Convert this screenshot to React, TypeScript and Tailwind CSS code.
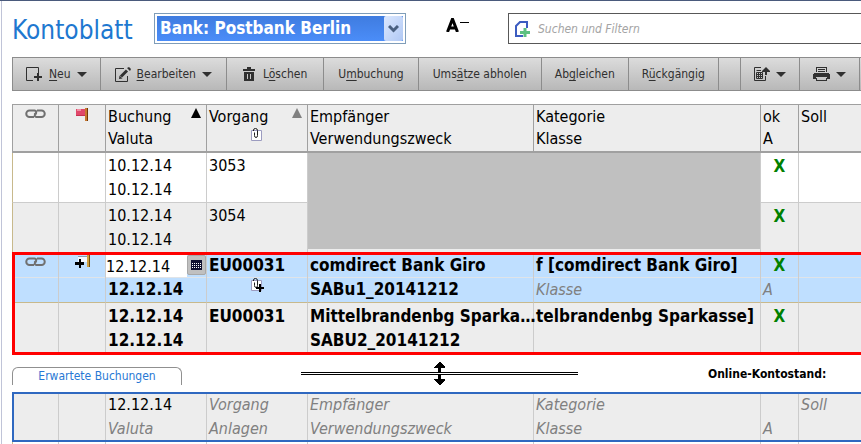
import type { ReactNode } from "react";

const FONT = "font-['DejaVu_Sans_Condensed','DejaVu_Sans',sans-serif]";

function Caret() {
  return (
    <svg width="10" height="5" viewBox="0 0 10 5" className="shrink-0 fill-[#303030]" aria-hidden="true">
      <path d="M0 0H10L5 5Z" />
    </svg>
  );
}

function ChainIcon() {
  return (
    <svg width="21" height="10" viewBox="0 0 21 10" fill="none" stroke="#707070" strokeWidth="2" className="inline-block align-top" aria-hidden="true">
      <path d="M9 8H4.500A3 3 0 0 1 4.500 1.500H9.500Q12 2 11 4L9.500 5.500" />
      <path d="M12 1.500H16.500A3 3 0 0 1 16.500 8H11.500Q9 7.500 10 5.500L11.500 4" />
    </svg>
  );
}

function FlagIcon() {
  return (
    <svg width="12" height="13" viewBox="0 0 12 13" shapeRendering="crispEdges" className="inline-block align-top" aria-hidden="true">
      <path fill="#e0486a" d="M0 1H9V8H0Z" />
      <path fill="#f090a4" d="M1 1H5V3H1Z" />
      <path fill="#c83050" d="M0 7H9V8H0Z" />
      <path fill="#c87830" d="M9 0H11V13H9Z" />
      <path fill="#703808" d="M11 0H12V13H11Z" />
    </svg>
  );
}

function AddFlagIcon() {
  return (
    <svg width="15" height="14" viewBox="0 0 15 14" shapeRendering="crispEdges" className="inline-block align-top" aria-hidden="true">
      <path fill="#f4f8ff" d="M3 1H12V7H3Z" />
      <path fill="#8c9cb0" d="M3 1H12V2H3Z" />
      <path fill="#d0a040" d="M12 0H14V12H12Z" />
      <path fill="#705010" d="M14 0H15V12H14Z" />
      <path fill="#000" d="M4 4H6V7H9V10H6V13H4V10H0V7H4Z" />
    </svg>
  );
}

function SortIcon({ className }: { className: string }) {
  return (
    <svg width="10" height="10" viewBox="0 0 10 10" className={className} aria-hidden="true">
      <path d="M5 0L10 10H0Z" />
    </svg>
  );
}

function ClipIcon({ add }: { add?: boolean }) {
  return (
    <svg width="14" height="14" viewBox="0 0 14 14" className="inline-block align-top" aria-hidden="true">
      <path fill="#fff" stroke="#9c9cc0" d="M1.500 2.500H11.500V12.500H1.500Z" />
      <path fill="none" stroke="#202020" d="M3.500 3V2Q3.500 .5 5.500 .5T7.500 2.500V7.500Q7.500 9.500 6 9.500T4.500 7.500V4.500" />
      {add && <path fill="#000" d="M9 6H11V9H14V11H11V14H9V11H6V9H9Z" />}
    </svg>
  );
}

function NewIcon() {
  return (
    <svg width="17" height="15" viewBox="0 0 17 15" fill="none" stroke="#303030" aria-hidden="true">
      <path d="M12.500 6V.5H.5V13.500H7" />
      <path strokeWidth="2" d="M12 6V14M8 10H16" />
    </svg>
  );
}

function EditIcon() {
  return (
    <svg width="16" height="15" viewBox="0 0 16 15" fill="none" stroke="#303030" aria-hidden="true">
      <path d="M9 1.500H.5V14.500H12.500V9" />
      <path strokeWidth="3" d="M6 9.500L12 3.500" />
      <path fill="#303030" stroke="none" d="M12 1L14 0L16 2L15 4ZM4.500 8.500L7.500 11.500L4 12Z" />
    </svg>
  );
}

function TrashIcon() {
  return (
    <svg width="12" height="14" viewBox="0 0 12 14" fill="#303030" shapeRendering="crispEdges" aria-hidden="true">
      <path d="M4 0H8V2H12V4H0V2H4Z" />
      <path fillRule="evenodd" d="M1 5H11V14H1ZM4 7V12H5V7ZM7 7V12H8V7Z" />
    </svg>
  );
}

function ExportIcon() {
  return (
    <svg width="16" height="14" viewBox="0 0 16 14" fill="none" stroke="#303030" aria-hidden="true">
      <path d="M7 .5H.5V13.500H11.500V9" />
      <path d="M2.500 3.500H7M2.500 5.500H8.500V11.500H2.500ZM2.500 7.500H8.500M2.500 9.500H8.500M4.500 5.500V11.500M6.500 5.500V11.500" />
      <path fill="#303030" stroke="none" d="M12 0L16 4V5H13V8H11V5H8V4Z" />
    </svg>
  );
}

function PrinterIcon() {
  return (
    <svg width="17" height="14" viewBox="0 0 17 14" fill="#303030" shapeRendering="crispEdges" aria-hidden="true">
      <path fillRule="evenodd" d="M3 0H14V5H13V1H4V5H3Z" />
      <path d="M5 2H12V3H5ZM5 4H12V5H5Z" />
      <path d="M1 6H16V7H17V12H14V10H3V12H0V7H1Z" />
      <path d="M3 11H4V13H13V11H14V14H3Z" />
    </svg>
  );
}

function ToolButton({
  icon,
  before = "",
  hotkey,
  after,
  menu,
  pad = "px-[13px] gap-1.5",
}: {
  icon?: ReactNode;
  before?: string;
  hotkey?: string;
  after?: string;
  menu?: boolean;
  pad?: string;
}) {
  return (
    <button type="button" className={`flex items-center shrink-0 border-r border-[#8c8c8c] whitespace-nowrap ${pad}`}>
      {icon}
      {after && (
        <span>
          {before}
          <span className="underline underline-offset-2">{hotkey}</span>
          {after}
        </span>
      )}
      {menu && <Caret />}
    </button>
  );
}

function Columns() {
  return (
    <colgroup>
      <col className="w-[47px]" />
      <col className="w-[47px]" />
      <col className="w-[101px]" />
      <col className="w-[101px]" />
      <col className="w-[226px]" />
      <col className="w-[227px]" />
      <col className="w-[38px]" />
      <col />
    </colgroup>
  );
}

const HEAD = "border-r border-[#a0a0a0] border-t border-b-2 px-0.5 py-px font-normal text-left align-top leading-[22px] first:border-l last:border-r-0 whitespace-nowrap";
const CELL = "border-r border-b border-[#cccccc] px-0.5 pt-px align-top leading-6 first:border-l first:border-l-[#c8b98c] last:border-r-0 whitespace-nowrap";
const ACTIVE = "border-r border-b border-r-[#cccccc] border-b-[#c8b98c] p-0 align-top whitespace-nowrap last:border-r-0";

/* Two-line cell of the selected booking with a hairline between the lines */
function ActiveCell({ top, bottom, center }: { top?: ReactNode; bottom?: ReactNode; center?: boolean }) {
  return (
    <td className={ACTIVE}>
      <div className={`h-[25px] leading-6 border-b border-[#e0e4e8] px-0.5 ${center ? "text-center" : ""}`}>{top}</div>
      <div className="h-6 leading-[22px] px-0.5">{bottom}</div>
    </td>
  );
}

const Ok = () => <div className="text-center font-bold text-[17px] text-[#008000]">X</div>;
const Hint = ({ children }: { children: ReactNode }) => <span className="italic text-base font-normal text-[#808080]">{children}</span>;

export default function App() {
  return (
    <div className={`h-screen overflow-hidden flex flex-col bg-white text-base text-black border-t border-t-[#4a5a7c] ${FONT}`}>
      <div className="flex-1 min-h-0 flex flex-col ml-px border-l border-[#c0c4d8] pl-2.5">
        <header className="flex items-start pt-3 h-14 shrink-0">
          <h1 className="w-[142px] shrink-0 text-[26px] leading-[34px] text-[#1e78d0]">Kontoblatt</h1>
          <div className="relative w-[252px] h-[31px] shrink-0 border border-[#7f9db9] p-0.5">
            <select
              aria-label="Konto"
              className="appearance-none w-full h-full bg-linear-to-b from-[#3f7ce0] to-[#4b8df8] text-white text-[17px] font-bold pl-[3px] pr-5 outline-none"
            >
              <option>Bank: Postbank Berlin</option>
            </select>
            <span className="absolute right-0.5 top-0.5 bottom-0.5 w-[19px] rounded-xs bg-linear-to-br from-[#dce8fe] to-[#b0c8f4] flex items-center justify-center pointer-events-none">
              <svg width="11" height="8" viewBox="0 0 11 8" fill="none" stroke="#4a6080" strokeWidth="3" aria-hidden="true">
                <path d="M1 1L5.500 5.500L10 1" />
              </svg>
            </span>
          </div>
          <button type="button" aria-label="Schrift verkleinern" className="w-[102px] shrink-0 h-6 flex items-center justify-center">
            <svg width="23" height="14" viewBox="0 0 23 14" fill="none" stroke="#000" aria-hidden="true">
              <path strokeWidth="3" d="M1.500 14L6.500 1L11.500 14M3 10H10" />
              <path strokeWidth="1" d="M14 4.500H23" />
            </svg>
          </button>
          <label className="flex-1 min-w-0 flex items-center gap-2 h-[31px] border border-r-0 border-[#585858] pl-1.5">
            <svg width="15" height="16" viewBox="0 0 15 16" fill="none" className="shrink-0" aria-hidden="true">
              <path stroke="#3c5cc0" strokeWidth="2" d="M8 15H1V5L5 1H12V7" />
              <path stroke="#5cc080" strokeWidth="3" d="M10 7V16M5 11.500H15" />
            </svg>
            <input
              aria-label="Suchen und Filtern"
              placeholder="Suchen und Filtern"
              className="flex-1 min-w-0 text-xs italic outline-none placeholder:text-[#a4a4a4]"
            />
          </label>
        </header>

        <nav className="flex shrink-0 h-[34px] border-y border-l border-[#8c8c8c] bg-linear-to-b from-[#dcdcdc] to-[#b8b8b8] text-xs text-[#303030]">
          <ToolButton icon={<NewIcon />} hotkey="N" after="eu" menu />
          <ToolButton icon={<EditIcon />} hotkey="B" after="earbeiten" menu pad="px-3.5 gap-1.5" />
          <ToolButton icon={<TrashIcon />} before="L" hotkey="ö" after="schen" pad="px-4 gap-2" />
          <ToolButton before="U" hotkey="m" after="buchung" pad="px-3.5" />
          <ToolButton before="Ums" hotkey="ä" after="tze abholen" pad="px-3.5" />
          <ToolButton before="Ab" hotkey="g" after="leichen" />
          <ToolButton before="R" hotkey="ü" after="ckgängig" />
          <div className="w-[22px] shrink-0 border-r border-[#8c8c8c]" />
          <ToolButton icon={<ExportIcon />} menu />
          <ToolButton icon={<PrinterIcon />} menu />
        </nav>

        <div className="relative mt-[13px] pb-0.5 shrink-0">
          <table className="w-full table-fixed border-separate border-spacing-0">
            <Columns />
            <thead className="bg-[#ededed]">
              <tr>
                <th className={HEAD}><div className="pt-[3px] text-center"><ChainIcon /></div></th>
                <th className={HEAD}><div className="pt-0.5 text-center"><FlagIcon /></div></th>
                <th className={HEAD}>
                  <div className="flex justify-between">Buchung<SortIcon className="mt-0.5 mr-[3px] fill-black" /></div>
                  <div>Valuta</div>
                </th>
                <th className={HEAD}>
                  <div className="flex justify-between">Vorgang<SortIcon className="mt-0.5 mr-[3px] fill-[#808080]" /></div>
                  <div className="text-center"><ClipIcon /></div>
                </th>
                <th className={HEAD}>Empfänger<br />Verwendungszweck</th>
                <th className={HEAD}>Kategorie<br />Klasse</th>
                <th className={HEAD}>ok<br />A</th>
                <th className={HEAD}>Soll</th>
              </tr>
            </thead>
            <tbody>
              <tr className="bg-white">
                <td className={CELL} />
                <td className={CELL} />
                <td className={CELL}>10.12.14<br />10.12.14</td>
                <td className={CELL}>3053</td>
                <td rowSpan={2} colSpan={2} className="border-r border-b border-[#cccccc] bg-[#ededed] p-0 align-top">
                  <div className="h-24 bg-[#c0c0c0]" />
                </td>
                <td className={CELL}><Ok /></td>
                <td className={CELL} />
              </tr>
              <tr className="bg-[#ededed]">
                <td className={CELL} />
                <td className={CELL} />
                <td className={CELL}>10.12.14<br />10.12.14</td>
                <td className={CELL}>3054</td>
                <td className={CELL}><Ok /></td>
                <td className={CELL} />
              </tr>
              <tr className="bg-[#bfdfff] text-[17px] font-bold">
                <ActiveCell center top={<div className="pt-1"><ChainIcon /></div>} />
                <ActiveCell center top={<div className="pt-0.5"><AddFlagIcon /></div>} />
                <td className={ACTIVE}>
                  <div className="flex h-[25px] pt-0.5 border-b border-[#e0e4e8]">
                    <input aria-label="Buchung" defaultValue="12.12.14" className="flex-1 min-w-0 bg-white text-base font-normal pt-0.5 outline-none" />
                    <button type="button" aria-label="Kalender" className="w-[19px] h-5 rounded-xs border border-[#a8a8a8] bg-[#c0c0c0] flex items-center justify-center">
                      <svg width="11" height="10" viewBox="0 0 11 10" shapeRendering="crispEdges" aria-hidden="true">
                        <path fill="#101030" d="M0 0H11V10H0Z" />
                        <path stroke="#fff" strokeDasharray="1 1" d="M1 3.500H10M1 5.500H10M1 7.500H10" />
                      </svg>
                    </button>
                  </div>
                  <div className="h-6 leading-[22px] px-0.5">12.12.14</div>
                </td>
                <ActiveCell top="EU00031" bottom={<div className="text-center"><ClipIcon add /></div>} />
                <ActiveCell top="comdirect Bank Giro" bottom="SABu1_20141212" />
                <ActiveCell top="f [comdirect Bank Giro]" bottom={<Hint>Klasse</Hint>} />
                <ActiveCell top={<Ok />} bottom={<Hint>A</Hint>} />
                <ActiveCell />
              </tr>
              <tr className="bg-[#ededed] text-[17px] font-bold">
                <td className={CELL} />
                <td className={CELL} />
                <td className={CELL}>12.12.14<br />12.12.14</td>
                <td className={CELL}>EU00031</td>
                <td className={CELL}>Mittelbrandenbg Sparka…<br />SABU2_20141212</td>
                <td className={CELL}>telbrandenbg Sparkasse]</td>
                <td className={CELL}><Ok /></td>
                <td className={CELL} />
              </tr>
            </tbody>
          </table>
          {/* frame round the two linked bookings */}
          <div className="absolute inset-x-0 bottom-0 h-[103px] border-[3px] border-r-0 border-[#ff0000] pointer-events-none" />
        </div>

        <div className="flex items-center shrink-0 h-[37px]">
          <button type="button" className="w-[170px] h-[18px] mt-1 shrink-0 rounded-t-md border border-b-0 border-[#909090] text-xs text-[#2878d4]">
            Erwartete Buchungen
          </button>
          <svg width="277" height="23" viewBox="0 0 277 23" shapeRendering="crispEdges" className="ml-[119px] shrink-0" aria-hidden="true">
            <path d="M0 10H277V11H0ZM0 12H277V13H0Z" />
            <path d="M138 0H139L144 5V6H140V10H137V6H133V5ZM137 13H140V17H144V18L139 23H138L133 18V17H137Z" />
          </svg>
          <strong className="ml-[130px] text-xs whitespace-nowrap">Online-Kontostand:</strong>
        </div>

        <div className="relative flex-1 min-h-0 overflow-hidden">
          <table className="w-full table-fixed border-separate border-spacing-0">
            <Columns />
            <tbody>
              <tr className="bg-[#ededed]">
                <td className={CELL} />
                <td className={CELL} />
                <td className={CELL}>12.12.14<br /><Hint>Valuta</Hint></td>
                <td className={CELL}><Hint>Vorgang<br />Anlagen</Hint></td>
                <td className={CELL}><Hint>Empfänger<br />Verwendungszweck</Hint></td>
                <td className={CELL}><Hint>Kategorie<br />Klasse</Hint></td>
                <td className={CELL}><br /><Hint>A</Hint></td>
                <td className={CELL}><Hint>Soll</Hint></td>
              </tr>
              <tr className="h-[50px]">
                <td className={CELL} />
                <td className={CELL} />
                <td className={CELL} />
                <td className={CELL} />
                <td className={CELL} />
                <td className={CELL} />
                <td className={CELL} />
                <td className={CELL} />
              </tr>
            </tbody>
          </table>
          <div className="absolute inset-x-0 top-0 h-[50px] border-2 border-r-0 border-[#2f68c0] pointer-events-none" />
        </div>
      </div>
    </div>
  );
}
